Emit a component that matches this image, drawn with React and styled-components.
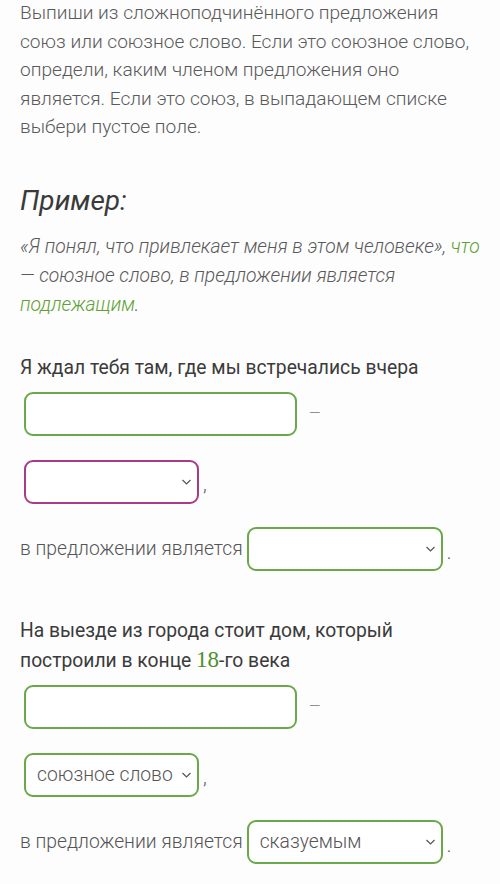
import styled, { createGlobalStyle } from "styled-components";

const Global = createGlobalStyle`
  html, body {
    margin: 0;
    padding: 0;
    background: #fdfdfd;
  }
  body {
    font-family: Roboto, "Noto Sans", "Liberation Sans", sans-serif;
  }
`;

const Page = styled.div`
  width: 500px;
  padding: 0 20px;
  box-sizing: border-box;
  margin-top: -1px;
`;

const Intro = styled.p`
  margin: 0;
  font-size: 19.1px;
  font-weight: 300;
  line-height: 28.5px;
  color: #5a5a5a;
`;

const ExampleTitle = styled.h2`
  margin: 42px 0 0;
  font-size: 28px;
  font-weight: 400;
  font-style: italic;
  line-height: 34px;
  color: #3a3a3a;
`;

const ExampleText = styled.p`
  margin: 14px 0 0;
  font-size: 19.3px;
  font-weight: 300;
  font-style: italic;
  line-height: 29px;
  color: #5a5a5a;
`;

const Green = styled.span`
  color: #5fa135;
`;

const Task = styled.div`
  margin-top: ${(p) => p.$top}px;
`;

const Question = styled.div`
  font-size: 19.3px;
  font-weight: 400;
  line-height: 30px;
  color: #3b3b3b;
`;

const Num = styled.span`
  font-family: "Liberation Serif", "DejaVu Serif", serif;
  font-size: 23px;
  line-height: 1;
  color: #4d8f2b;
`;

const Row = styled.div`
  display: flex;
  align-items: center;
  margin-top: ${(p) => p.$top}px;
  font-size: 19.3px;
  font-weight: 300;
  color: #555;
`;

const Field = styled.input`
  box-sizing: border-box;
  width: 273px;
  height: 44px;
  margin-left: 4px;
  border: 2px solid #6aa84a;
  border-radius: 9px;
  background: #fff;
  outline: none;
`;

const Dash = styled.span`
  margin-left: 12px;
  margin-top: -2px;
  font-size: 15px;
  color: #777;
`;

const Select = styled.div`
  box-sizing: border-box;
  display: flex;
  align-items: center;
  justify-content: space-between;
  width: ${(p) => p.$w}px;
  height: 44px;
  margin-left: 4px;
  padding: 0 5px 0 11px;
  border: 2px solid ${(p) => (p.$bad ? "#a83a86" : "#6aa84a")};
  border-radius: 9px;
  background: #fff;
  font-size: 19.3px;
  font-weight: 300;
  color: #555;
`;

const Mark = styled.span`
  margin-left: 4px;
  margin-top: ${(p) => p.$dy || 0}px;
  color: #555;
`;

const Chevron = () => (
  <svg width="11" height="8" viewBox="0 0 11 8">
    <path d="M1.5 2 L5.5 6 L9.5 2" fill="none" stroke="#555" strokeWidth="1.2" />
  </svg>
);

function Answer({ top, kind, role }) {
  return (
    <>
      <Row $top={top}>
        <Field />
        <Dash>—</Dash>
      </Row>
      <Row $top={24}>
        <Select $w={175} $bad={!kind}>
          <span>{kind}</span>
          <Chevron />
        </Select>
        <Mark $dy={6}>,</Mark>
      </Row>
      <Row $top={23}>
        <span>в предложении является</span>
        <Select $w={196}>
          <span>{role}</span>
          <Chevron />
        </Select>
        <Mark $dy={8}>.</Mark>
      </Row>
    </>
  );
}

export default function App() {
  return (
    <Page>
      <Global />
      <Intro>
        Выпиши из сложноподчинённого предложения союз или союзное слово. Если
        это союзное слово, определи, каким членом предложения оно является.
        Если это союз, в выпадающем списке выбери пустое поле.
      </Intro>
      <ExampleTitle>Пример:</ExampleTitle>
      <ExampleText>
        «Я понял, что привлекает меня в этом человеке», <Green>что</Green> —
        союзное слово, в предложении является <Green>подлежащим</Green>.
      </ExampleText>
      <Task $top={34}>
        <Question>Я ждал тебя там, где мы встречались вчера</Question>
        <Answer top={9} kind="" role="" />
      </Task>
      <Task $top={45}>
        <Question>
          На выезде из города стоит дом, который построили в конце <Num>18</Num>-го века
        </Question>
        <Answer top={9} kind="союзное слово" role="сказуемым" />
      </Task>
    </Page>
  );
}
